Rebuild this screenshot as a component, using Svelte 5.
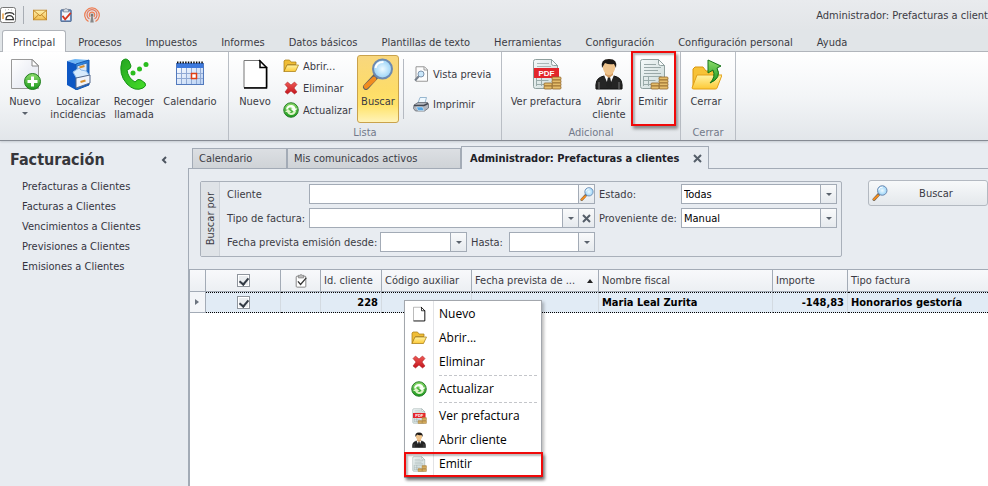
<script lang="ts">
  const quickIcons = [
    { icon: 'mail', label: 'Correo' },
    { icon: 'clipboard', label: 'Tareas' },
    { icon: 'antenna', label: 'Comunicados' }
  ];

  const ribbonTabs = [
    'Principal',
    'Procesos',
    'Impuestos',
    'Informes',
    'Datos básicos',
    'Plantillas de texto',
    'Herramientas',
    'Configuración',
    'Configuración personal',
    'Ayuda'
  ];

  const navLinks = [
    'Prefacturas a Clientes',
    'Facturas a Clientes',
    'Vencimientos a Clientes',
    'Previsiones a Clientes',
    'Emisiones a Clientes'
  ];

  const menuGroups = [
    [
      { icon: 'page', label: 'Nuevo' },
      { icon: 'folder', label: 'Abrir...' },
      { icon: 'delete', label: 'Eliminar' }
    ],
    [{ icon: 'refresh', label: 'Actualizar' }],
    [
      { icon: 'pdf', label: 'Ver prefactura' },
      { icon: 'client', label: 'Abrir cliente' },
      { icon: 'emit', label: 'Emitir' }
    ]
  ];

  let activeRibbonTab = $state('Principal');
  let cliente = $state('');
  let tipoFactura = $state('');
  let desde = $state('');
  let hasta = $state('');
  let estado = $state('Todas');
  let proveniente = $state('Manual');
  let allChecked = $state(true);
  let rowChecked = $state(true);
</script>

{#snippet sheet()}
  <path d="M5.500 1.500h16l6 6v21a2 2 0 0 1-2 2h-20a2 2 0 0 1-2-2v-25a2 2 0 0 1 2-2z" fill="url(#g-sheet)" stroke="#8fa09f" />
  <path d="M21.500 1.500v4a2 2 0 0 0 2 2h4z" fill="#f7fafa" stroke="#8fa09f" />
  <path d="M6.500 18.500h18M6.500 22.500h12M6.500 26.500h9M6.500 18v10M11.500 18v10" stroke="#9aabaa" fill="none" />
{/snippet}

{#snippet coins()}
  <g fill="#e5bd6b" stroke="#8f642a" stroke-width=".8">
    <rect x="22" y="19" width="9" height="3" rx="1" />
    <rect x="22" y="22" width="9" height="3" rx="1" />
    <rect x="22" y="25" width="9" height="3" rx="1" />
    <rect x="22" y="28" width="9" height="3" rx="1" />
    <rect x="14" y="25" width="8" height="3" rx="1" />
    <rect x="14" y="28" width="8" height="3" rx="1" />
  </g>
{/snippet}

{#snippet icon(name: string, size: number)}
  <svg class="icon" width={size} height={size} viewBox="0 0 32 32" aria-hidden="true">
    {#if name === 'app'}
      <rect x="1" y="1" width="30" height="30" rx="4" fill="#fff" stroke="#777" stroke-width="2" />
      <path d="M6 13v11" stroke="#e79b3c" stroke-width="3" />
      <path d="M10 6h2M16 5h2M22 6h2" stroke="#b9b9b9" stroke-width="2" />
      <path d="M10 15q1-4 9-4t9 5" fill="none" stroke="#333" stroke-width="2.500" />
      <path d="M12 25q0-8 7-8t8 8z" fill="#fff" stroke="#333" stroke-width="2.500" />
    {:else if name === 'mail'}
      <rect x="1" y="5" width="30" height="22" fill="url(#g-mail)" stroke="#c48a2a" stroke-width="2" />
      <path d="M2 6l14 12L30 6M2 26l10-10M30 26L20 16" fill="none" stroke="#b97c1d" stroke-width="2" />
    {:else if name === 'clipboard'}
      <rect x="4" y="4" width="24" height="27" rx="2" fill="#6d8fc0" stroke="#49658f" stroke-width="2" />
      <rect x="7" y="8" width="18" height="20" fill="#f5f7fb" />
      <path d="M10 3h3q3-4 6 0h3v6H10z" fill="#d7dde6" stroke="#6b7686" stroke-width="1.500" />
      <path d="M8 18l6 8L27 11" fill="none" stroke="#d6361f" stroke-width="4" />
    {:else if name === 'antenna'}
      <g fill="none" stroke="#ee7d52" stroke-width="2.500">
        <path d="M9 29A14.500 14.500 0 1 1 23 29" />
        <path d="M11 24A10 10 0 1 1 21 24" stroke="#e07a62" />
        <path d="M12.500 20A5.500 5.500 0 1 1 19.500 20" />
      </g>
      <circle cx="16" cy="16" r="3" fill="#777" />
      <path d="M14.500 18h3l2 13h-7z" fill="#888" />
    {:else if name === 'new'}
      <path d="M2.500 1.500h21l6 6v23h-27z" fill="url(#g-paper)" stroke="#999" />
      <path d="M23 1.500v6.500h6.500z" fill="#fff" stroke="#888" />
      <circle cx="23.500" cy="23.500" r="8" fill="url(#g-green)" stroke="#1e7d1c" />
      <path d="M23.500 18.500v10M18.500 23.500h10" stroke="#fff" stroke-width="3" />
    {:else if name === 'cabinet'}
      <path d="M5 3l8-2 14 1-13 4z" fill="#6db5f5" />
      <path d="M5 3l9 3v26l-9-5z" fill="#0d57c4" />
      <path d="M14 6l13-4v25l-13 5z" fill="url(#g-blue)" stroke="#1556ad" />
      <path d="M15 8l10-3v8l-10 3z" fill="#dbe7f7" stroke="#3370b8" />
      <path d="M11 14l6-4 2 2 5 1 4 5-13 3z" fill="#d7eafc" stroke="#8db9e8" />
      <path d="M14 20l14-3v8l-14 5z" fill="#f0f3fa" stroke="#54698c" />
      <path d="M17.500 9.500l5-1.500M18.500 24l5-1.500" stroke="#d9902d" stroke-width="2" />
    {:else if name === 'phone'}
      <path d="M4 3q4-4 7 0l2 5q0 3-4 4 1 8 8 12 3-4 6-2l4 3q2 3-2 5-8 4-16-4Q0 16 4 3z" fill="url(#g-phone)" stroke="#169316" />
      <circle cx="15" cy="15" r="2.500" fill="#2bbd1f" />
      <circle cx="21.500" cy="11" r="2.500" fill="#2bbd1f" />
      <circle cx="28" cy="6.500" r="2.500" fill="#2bbd1f" />
    {:else if name === 'calendar'}
      <rect x="2.500" y="5.500" width="27" height="21" fill="url(#g-cal)" stroke="#5279bd" />
      <path d="M3 5h26v5H3z" fill="#3d79dd" />
      <path d="M3 4.500h27" stroke="#111" stroke-width="2" stroke-dasharray="1.500 1.200" />
      <path d="M3 15.500h26M3 20.500h26M7.500 10v16M12.500 10v16M17.500 10v16M22.500 10v16M26.500 10v16" stroke="#90a9d4" />
      <rect x="17.500" y="15.500" width="5" height="5" fill="#fff" stroke="#e13d12" stroke-width="1.500" />
    {:else if name === 'page'}
      <path d="M5 2.500h16l7 7v20H5z" fill="#fff" stroke="#777" />
      <path d="M21 2.500v7h6.500V30H5" fill="none" stroke="#000" stroke-width="1.500" />
      <path d="M20 2l8 8" stroke="#000" stroke-width="1.500" />
    {:else if name === 'folder'}
      <path d="M2 27V6l2-2h9l3 4h10v5H9z" fill="#f0bd35" stroke="#a97e16" stroke-width="1.500" />
      <path d="M2 27L8 14h23l-6 13z" fill="url(#g-folder)" stroke="#a97e16" stroke-width="1.500" />
    {:else if name === 'delete'}
      <path d="M4 9l5-5 7 6 7-6 5 5-6 7 6 8-5 4-7-6-7 6-5-4 6-8z" fill="url(#g-red)" stroke="#a51519" />
    {:else if name === 'refresh'}
      <circle cx="16" cy="16" r="14.500" fill="url(#g-green)" stroke="#2a7e2b" stroke-width="2" />
      <path d="M6 15Q7 5 18 6q6 1 7 7h4l-7 7-7-7h4q-2-3-6-2-3 1-3 4z" fill="#fafff6" />
      <path d="M26 18q-2 9-11 8-5-1-7-6H4l6-6 7 6h-4q3 3 6 1 2-1 3-3z" fill="#dff5c8" />
    {:else if name === 'search'}
      <path d="M15 17L4 29" stroke="#60615f" stroke-width="6" stroke-linecap="round" />
      <path d="M12 21L4 28.500" stroke="#f28c1f" stroke-width="4.500" stroke-linecap="round" />
      <circle cx="20.500" cy="11" r="9.500" fill="url(#g-lens)" stroke="#6d89b0" stroke-width="2" />
      <path d="M13.500 10q1-6 8-6" fill="none" stroke="#fff" stroke-width="2" />
    {:else if name === 'preview'}
      <path d="M6 1.500h17l6 6v23H6z" fill="#fdfdfd" stroke="#999" stroke-width="2" />
      <path d="M22 2v6h7" fill="none" stroke="#999" stroke-width="2" />
      <path d="M12 20l-8 9" stroke="#77808c" stroke-width="4" />
      <circle cx="16" cy="16" r="6" fill="#cbe8fb" stroke="#7c93ac" stroke-width="2" />
    {:else if name === 'print'}
      <path d="M14 3h13l-4 14H9z" fill="#eff9ff" stroke="#79a1c2" stroke-width="1.500" />
      <path d="M2 18l8-5h19l2 3v8l-8 6H5l-4-5z" fill="#b2b6be" stroke="#5e646e" stroke-width="1.500" />
      <path d="M2 19h20l8-4" fill="none" stroke="#434852" stroke-width="3" />
      <path d="M7 22h12l3 7H10z" fill="#55a7e6" stroke="#e7f4ff" />
    {:else if name === 'pdf'}
      {@render sheet()}
      <path d="M7 5.500h12M7 8.500h14" stroke="#aab8b7" />
      <rect x="4" y="10" width="25" height="10" fill="#e3262b" />
      <text class="pdf-text" x="16.500" y="18" text-anchor="middle">PDF</text>
      {@render coins()}
    {:else if name === 'client'}
      <path d="M3 31q-1-10 5-12l6-2h4l6 2q6 2 5 12z" fill="#252525" stroke="#111" />
      <path d="M11 17l5 12 5-12-5-2z" fill="#fff" />
      <path d="M15 19h2l2 9-3 3-3-3z" fill="#222" />
      <path d="M12 12h8v5l-4 3-4-3z" fill="#d39c62" />
      <path d="M10 6q6-5 12 0v5q-2 6-6 6t-6-6z" fill="#efc48d" />
      <path d="M9 10Q7 1 16 1t7 9l-2-4q-5 1-9-1z" fill="#1d1916" />
      <path d="M6 24v7M26 24v7" stroke="#777" />
    {:else if name === 'emit'}
      {@render sheet()}
      <path d="M7 6.500h12M7 9.500h17M7 12.500h14M7 15.500h17" stroke="#99a8a8" />
      {@render coins()}
    {:else if name === 'close-folder'}
      <path d="M3 30V11l2-2h8l3 4h12v10H9z" fill="#f7c237" stroke="#d8960f" />
      <path d="M2 30l5-13h25l-5 13q0 1-2 1H4q-2 0-2-1z" fill="url(#g-folder)" stroke="#e3a019" />
      <path d="M20 25q6-6 3-13l-5 3V2l13 6-4 2q5 10-7 15z" fill="url(#g-green)" stroke="#167318" />
    {:else if name === 'clipboard-gray'}
      <rect x="5" y="5" width="22" height="25" rx="2" fill="#fff" stroke="#777" stroke-width="2" />
      <path d="M10 3h3q3-4 6 0h3v6H10z" fill="#bbb" stroke="#777" stroke-width="1.500" />
      <path d="M9 17l6 7L28 9" fill="none" stroke="#333" stroke-width="3" />
    {/if}
  </svg>
{/snippet}

{#snippet bigButton(name: string, label: string, kind = '')}
  <button type="button" class="big-button {kind}">
    {@render icon(name, 32)}
    <span>{label}</span>
    {#if name === 'new'}
      <i class="caret"></i>
    {/if}
  </button>
{/snippet}

{#snippet smallButton(name: string, label: string)}
  <button type="button" class="small-button">
    {@render icon(name, 16)}
    <span>{label}</span>
  </button>
{/snippet}

{#snippet cross()}
  <svg width="9" height="9" viewBox="0 0 9 9" aria-hidden="true">
    <path d="M1 1l7 7M8 1L1 8" stroke="#555e69" stroke-width="2" />
  </svg>
{/snippet}

<!-- Shared gradients -->
<svg class="defs" width="0" height="0" aria-hidden="true">
  <defs>
    <linearGradient id="g-sheet" x2="1" y2="1"><stop stop-color="#f4f9f9" /><stop offset="1" stop-color="#cbd9d8" /></linearGradient>
    <linearGradient id="g-paper" x2="1" y2="1"><stop stop-color="#fff" /><stop offset="1" stop-color="#dfe3ef" /></linearGradient>
    <linearGradient id="g-mail" x2="0" y2="1"><stop stop-color="#fff3b0" /><stop offset="1" stop-color="#f2bd4c" /></linearGradient>
    <linearGradient id="g-green" x2="0" y2="1"><stop stop-color="#8ddc6c" /><stop offset="1" stop-color="#1b991d" /></linearGradient>
    <linearGradient id="g-phone" x2="1" y2="1"><stop stop-color="#25a521" /><stop offset="1" stop-color="#45de28" /></linearGradient>
    <linearGradient id="g-blue" x2="1" y2="1"><stop stop-color="#3ba1f7" /><stop offset="1" stop-color="#0b4cb4" /></linearGradient>
    <linearGradient id="g-cal" x2="1" y2="1"><stop stop-color="#fff" /><stop offset="1" stop-color="#b7d0f4" /></linearGradient>
    <linearGradient id="g-folder" x2="0" y2="1"><stop stop-color="#fff3a5" /><stop offset="1" stop-color="#fdc935" /></linearGradient>
    <linearGradient id="g-red" x2="0" y2="1"><stop stop-color="#ef5a56" /><stop offset="1" stop-color="#c3141c" /></linearGradient>
    <radialGradient id="g-lens"><stop stop-color="#eefaff" /><stop offset="1" stop-color="#98d3f8" /></radialGradient>
  </defs>
</svg>

<div class="app">
  <header class="titlebar">
    <button type="button" class="quick app-icon" aria-label="Aplicación">{@render icon('app', 16)}</button>
    <span class="quick-divider"></span>
    {#each quickIcons as item (item.icon)}
      <button type="button" class="quick" aria-label={item.label}>{@render icon(item.icon, item.icon === 'antenna' ? 16 : 14)}</button>
    {/each}
    <span class="window-title">Administrador: Prefacturas a client</span>
  </header>

  <nav class="ribbon-tabs">
    {#each ribbonTabs as tab (tab)}
      <button type="button" class:active={tab === activeRibbonTab} onclick={() => (activeRibbonTab = tab)}>{tab}</button>
    {/each}
  </nav>

  <div class="ribbon">
    <section class="group main-group">
      <div class="group-body">
        {@render bigButton('new', 'Nuevo', 'narrow')}
        {@render bigButton('cabinet', 'Localizar incidencias', 'wide')}
        {@render bigButton('phone', 'Recoger llamada')}
        {@render bigButton('calendar', 'Calendario', 'wide')}
      </div>
    </section>
    <section class="group list-group">
      <div class="group-body">
        {@render bigButton('page', 'Nuevo', 'medium')}
        <div class="stack">
          {@render smallButton('folder', 'Abrir...')}
          {@render smallButton('delete', 'Eliminar')}
          {@render smallButton('refresh', 'Actualizar')}
        </div>
        {@render bigButton('search', 'Buscar', 'pressed')}
        <span class="divider"></span>
        <div class="stack loose">
          {@render smallButton('preview', 'Vista previa')}
          {@render smallButton('print', 'Imprimir')}
        </div>
      </div>
      <h2>Lista</h2>
    </section>
    <section class="group extra-group">
      <div class="group-body">
        {@render bigButton('pdf', 'Ver prefactura', 'widest')}
        {@render bigButton('client', 'Abrir cliente', 'narrow')}
        {@render bigButton('emit', 'Emitir', 'narrow marked')}
      </div>
      <h2>Adicional</h2>
    </section>
    <section class="group close-group">
      <div class="group-body">
        {@render bigButton('close-folder', 'Cerrar', 'narrow')}
      </div>
      <h2>Cerrar</h2>
    </section>
  </div>

  <div class="workspace">
    <aside>
      <div class="aside-header">
        <h1>Facturación</h1>
        <button type="button" aria-label="Contraer">
          <svg width="6" height="8" viewBox="0 0 6 8" aria-hidden="true">
            <path d="M5 1L2 4l3 3" fill="none" stroke="#4d5560" stroke-width="2" />
          </svg>
        </button>
      </div>
      <ul>
        {#each navLinks as link (link)}
          <li><a href="#top">{link}</a></li>
        {/each}
      </ul>
    </aside>

    <main>
      <div class="doc-tabs">
        <button type="button" class="doc-tab first">Calendario</button>
        <button type="button" class="doc-tab second">Mis comunicados activos</button>
        <div class="doc-tab active">
          <span>Administrador: Prefacturas a clientes</span>
          <button type="button" aria-label="Cerrar pestaña">{@render cross()}</button>
        </div>
      </div>

      <div class="document">
        <div class="filters">
          <form class="search-panel" onsubmit={(e) => e.preventDefault()}>
            <div class="side-caption"><span>Buscar por</span></div>
            <div class="fields">
              <label for="cliente">Cliente</label>
              <div class="control">
                <input id="cliente" bind:value={cliente} />
                <button type="button" aria-label="Buscar cliente">{@render icon('search', 14)}</button>
              </div>
              <label for="estado">Estado:</label>
              <div class="control">
                <select id="estado" bind:value={estado}>
                  <option>Todas</option>
                </select>
                <i class="arrow"></i>
              </div>

              <label for="tipo">Tipo de factura:</label>
              <div class="control">
                <select id="tipo" bind:value={tipoFactura}>
                  <option value=""></option>
                  <option>Honorarios gestoría</option>
                </select>
                <i class="arrow"></i>
                <button type="button" aria-label="Borrar" onclick={() => (tipoFactura = '')}>{@render cross()}</button>
              </div>
              <label for="proveniente">Proveniente de:</label>
              <div class="control">
                <select id="proveniente" bind:value={proveniente}>
                  <option>Manual</option>
                </select>
                <i class="arrow"></i>
              </div>

              <div class="dates">
                <label for="desde">Fecha prevista emisión desde:</label>
                <div class="control">
                  <input id="desde" bind:value={desde} />
                  <button type="button" aria-label="Elegir fecha desde"><i class="caret"></i></button>
                </div>
                <label for="hasta">Hasta:</label>
                <div class="control">
                  <input id="hasta" bind:value={hasta} />
                  <button type="button" aria-label="Elegir fecha hasta"><i class="caret"></i></button>
                </div>
              </div>
            </div>
          </form>
          <button type="button" class="search-button">
            {@render icon('search', 16)}
            <span>Buscar</span>
          </button>
        </div>

        <div class="grid">
          <table>
            <colgroup>
              <col class="c-mark" />
              <col class="c-check" />
              <col class="c-task" />
              <col class="c-id" />
              <col class="c-code" />
              <col class="c-date" />
              <col class="c-name" />
              <col class="c-check" />
              <col />
            </colgroup>
            <thead>
              <tr>
                <th></th>
                <th class="center"><input type="checkbox" aria-label="Seleccionar todo" bind:checked={allChecked} /></th>
                <th class="center">{@render icon('clipboard-gray', 14)}</th>
                <th>Id. cliente</th>
                <th>Código auxiliar</th>
                <th><span class="sorted">Fecha prevista de ... <i></i></span></th>
                <th>Nombre fiscal</th>
                <th>Importe</th>
                <th>Tipo factura</th>
              </tr>
            </thead>
            <tbody>
              <tr>
                <td class="mark"><i></i></td>
                <td class="center"><input type="checkbox" aria-label="Seleccionar fila" bind:checked={rowChecked} /></td>
                <td></td>
                <td class="number">228</td>
                <td></td>
                <td></td>
                <td>Maria Leal Zurita</td>
                <td class="number">-148,83</td>
                <td>Honorarios gestoría</td>
              </tr>
            </tbody>
          </table>

          <div class="menu" role="menu">
            {#each menuGroups as items, i}
              {#if i > 0}
                <hr />
              {/if}
              {#each items as item (item.label)}
                <button type="button" role="menuitem" class:marked={item.icon === 'emit'}>
                  {@render icon(item.icon, 16)}
                  <span>{item.label}</span>
                </button>
              {/each}
            {/each}
          </div>
        </div>
      </div>
    </main>
  </div>
</div>

<style>
  :global(body) {
    margin: 0;
    background: #e8ecf1;
    overflow: hidden;
  }

  .defs {
    position: absolute;
  }

  .app {
    display: flex;
    flex-direction: column;
    height: 100vh;
    overflow: hidden;
    font-family: Tahoma, 'DejaVu Sans Condensed', 'DejaVu Sans', sans-serif;
    font-size: 11px;
    line-height: 13px;
    color: #3b3b44;
  }

  .app * {
    box-sizing: border-box;
  }

  button,
  input,
  select {
    margin: 0;
    padding: 0;
    border: 0;
    background: none;
    font: inherit;
    color: inherit;
  }

  .icon {
    display: block;
    flex: none;
  }

  .caret {
    display: block;
    border: 3px solid transparent;
    border-top-color: #5a626c;
    border-bottom: 0;
  }

  /* Title bar */
  .titlebar {
    display: flex;
    align-items: center;
    flex: none;
    height: 30px;
    background: linear-gradient(#e9ebee, #e2e5e8);
    white-space: nowrap;
  }

  .quick {
    display: flex;
    justify-content: center;
    width: 26px;
  }

  .app-icon {
    width: 16px;
  }

  .quick-divider {
    width: 1px;
    height: 18px;
    margin: 0 3px 0 7px;
    background: #a8adb4;
  }

  .window-title {
    margin-left: auto;
  }

  /* Ribbon */
  .ribbon-tabs {
    display: flex;
    flex: none;
    height: 22px;
    padding-left: 2px;
    background: #e1e5e8;
    border-bottom: 1px solid #b0b4ba;
    white-space: nowrap;
  }

  .ribbon-tabs button {
    height: 22px;
    padding: 2px 11px 0;
    border: 1px solid transparent;
    border-bottom: 0;
  }

  .ribbon-tabs button.active {
    background: #fff;
    border-color: #b0b4ba;
    border-radius: 3px 3px 0 0;
    padding: 2px 10px 0;
  }

  .ribbon {
    display: flex;
    flex: none;
    height: 89px;
    background: linear-gradient(#fff, #f3f5f7 50%, #e2e6ea);
    border-bottom: 1px solid #868b94;
    box-shadow: 0 1px 2px #c5cad1;
  }

  .group {
    display: flex;
    flex-direction: column;
    flex: none;
    padding: 3px 3px 0;
    border-right: 1px solid #b9bec5;
  }

  .main-group {
    width: 229px;
  }

  .list-group {
    width: 273px;
  }

  .extra-group {
    width: 179px;
  }

  .close-group {
    width: 55px;
  }

  .group-body {
    display: flex;
    height: 68px;
  }

  .group h2 {
    margin: 3px 0 0;
    font-size: 11px;
    font-weight: normal;
    text-align: center;
    color: #72798a;
  }

  .big-button {
    display: flex;
    flex-direction: column;
    align-items: center;
    flex: none;
    width: 50px;
    height: 68px;
    padding-top: 2px;
    border: 1px solid transparent;
    border-radius: 3px;
  }

  .big-button > span {
    margin-top: 5px;
  }

  .big-button > .caret {
    margin-top: 4px;
  }

  .narrow {
    width: 44px;
  }

  .medium {
    width: 46px;
  }

  .wide {
    width: 62px;
  }

  .widest {
    width: 82px;
  }

  .pressed {
    width: 42px;
    background: linear-gradient(#f8d77e, #fddc69 50%, #ffe36a 75%, #fff3b9);
    border-color: #c9a24c;
  }

  .marked {
    position: relative;
  }

  .marked::after {
    content: '';
    position: absolute;
    inset: -5px -2px -4px -1px;
    border: 2px solid #f00a0a;
    box-shadow: 2px 3px 3px #00000066, inset 2px 2px 2px #00000044;
    pointer-events: none;
  }

  .stack {
    display: flex;
    flex-direction: column;
    flex: none;
    width: 79px;
    padding-left: 5px;
  }

  .loose {
    width: 86px;
    padding-top: 8px;
    gap: 8px;
  }

  .small-button {
    display: flex;
    align-items: center;
    gap: 4px;
    height: 22px;
    white-space: nowrap;
  }

  .divider {
    width: 1px;
    margin: 4px;
    background: #b5bac2;
  }

  /* Navigation */
  .workspace {
    display: flex;
    flex: 1;
    min-height: 0;
  }

  aside {
    flex: none;
    width: 188px;
    padding: 9px 21px 0 10px;
  }

  .aside-header {
    display: flex;
    justify-content: space-between;
    align-items: center;
  }

  h1 {
    margin: 0;
    font-size: 16px;
    line-height: 20px;
    color: #36363b;
  }

  ul {
    margin: 7px 0 0;
    padding: 0 0 0 12px;
    list-style: none;
  }

  li {
    line-height: 20px;
    white-space: nowrap;
  }

  a {
    color: #34343f;
    text-decoration: none;
  }

  /* Document tabs */
  main {
    display: flex;
    flex-direction: column;
    flex: 1;
    min-width: 0;
    padding-top: 5px;
  }

  .doc-tabs {
    display: flex;
    align-items: flex-end;
    flex: none;
    height: 23px;
    padding-left: 4px;
    border-bottom: 1px solid #a3abb6;
    white-space: nowrap;
  }

  .doc-tab {
    display: flex;
    align-items: center;
    height: 20px;
    padding-left: 6px;
    background: linear-gradient(#dcdfe3, #cfd3d7);
    border: 1px solid #a3abb6;
    border-bottom: 0;
  }

  .first {
    width: 95px;
  }

  .second {
    width: 174px;
  }

  .doc-tab.active {
    justify-content: space-between;
    width: 248px;
    height: 23px;
    margin-bottom: -1px;
    padding: 0 6px 0 8px;
    background: #e8ecf1;
    font-weight: bold;
    color: #202027;
  }

  .doc-tab.active button {
    display: flex;
  }

  .document {
    display: flex;
    flex-direction: column;
    flex: 1;
    min-height: 0;
    border-left: 1px solid #a3abb6;
  }

  /* Search filters */
  .filters {
    display: flex;
    align-items: flex-start;
    gap: 26px;
    padding: 11px 0 12px 11px;
  }

  .search-panel {
    display: flex;
    flex: none;
    width: 642px;
    margin-top: 1px;
    border: 1px solid #a9b0ba;
    border-radius: 2px;
  }

  .side-caption {
    display: flex;
    align-items: center;
    justify-content: center;
    width: 19px;
    background: #dfe3e7;
    border-right: 1px solid #cdd2d8;
  }

  .side-caption span {
    writing-mode: vertical-rl;
    transform: rotate(180deg);
  }

  .fields {
    display: grid;
    grid-template-columns: 78px 286px 78px 1fr;
    grid-auto-rows: 20px;
    gap: 4px;
    flex: 1;
    align-items: center;
    padding: 2px 4px 4px 7px;
    white-space: nowrap;
  }

  .dates {
    grid-column: 1 / 3;
    display: grid;
    grid-template-columns: 149px 87px 34px minmax(0, 1fr);
    gap: 4px;
    align-items: center;
  }

  .control {
    display: flex;
    height: 20px;
    background: #fff;
    border: 1px solid #a3abb6;
  }

  .control input,
  .control select {
    flex: 1;
    min-width: 0;
    padding: 0 2px;
    color: #000;
    outline: 0;
    appearance: none;
  }

  .control button,
  .arrow {
    display: flex;
    align-items: center;
    justify-content: center;
    flex: none;
    width: 16px;
    background: linear-gradient(#f9fafb, #e6eaee);
    border-left: 1px solid #a3abb6;
  }

  .arrow {
    pointer-events: none;
  }

  .arrow::before {
    content: '';
    border: 3px solid transparent;
    border-top-color: #5a626c;
    border-bottom: 0;
  }

  .search-button {
    display: flex;
    align-items: center;
    flex: 1;
    min-width: 0;
    height: 26px;
    padding: 0 3px;
    background: linear-gradient(#f7f9fa, #e4e8ec);
    border: 1px solid #b3b9c1;
    border-radius: 3px;
  }

  .search-button span {
    flex: 1;
    text-align: center;
  }

  /* Data grid */
  .grid {
    position: relative;
    flex: 1;
    background: #fff;
    border-top: 1px solid #a3abb6;
    border-left: 1px solid #a3abb6;
  }

  table {
    width: 100%;
    table-layout: fixed;
    border-collapse: separate;
    border-spacing: 0;
  }

  .c-mark {
    width: 16px;
  }

  .c-check {
    width: 75px;
  }

  .c-task {
    width: 40px;
  }

  .c-id {
    width: 61px;
  }

  .c-code {
    width: 90px;
  }

  .c-date {
    width: 127px;
  }

  .c-name {
    width: 174px;
  }

  th,
  td {
    padding: 0 3px;
    text-align: left;
    white-space: nowrap;
    overflow: hidden;
  }

  th {
    height: 22px;
    background: linear-gradient(#f8f9fb, #eceff3);
    border-right: 1px solid #a3abb6;
    border-bottom: 1px solid #a3abb6;
    font-weight: normal;
  }

  th:last-child,
  td:last-child {
    border-right: 0;
  }

  td {
    height: 21px;
    background: #e1ebf5;
    border-top: 1px dotted #000;
    border-right: 1px solid #d3dae1;
    border-bottom: 1px dotted #000;
    font-weight: bold;
    color: #000;
  }

  td.mark {
    padding: 0 5px;
    background: #f3f5f8;
    border-top: 0;
    border-right: 1px solid #a3abb6;
    border-bottom: 1px solid #a3abb6;
  }

  .mark i {
    display: block;
    border: 3px solid transparent;
    border-left: 4px solid #6c747f;
    border-right: 0;
    width: 0;
  }

  .center {
    text-align: center;
  }

  .center .icon,
  .center input {
    display: block;
    margin: 0 auto;
  }

  .number {
    text-align: right;
  }

  input[type='checkbox'] {
    appearance: none;
    width: 13px;
    height: 13px;
    background: #e9ecef;
    border: 1px solid #8f959d;
    box-shadow: inset 0 0 0 1px #fff;
  }

  input[type='checkbox']:checked::after {
    content: '';
    display: block;
    width: 4px;
    height: 7px;
    margin: 1px 0 0 3px;
    border: solid #333b45;
    border-width: 0 2px 2px 0;
    transform: rotate(40deg);
  }

  .sorted {
    display: flex;
    justify-content: space-between;
    align-items: center;
    padding-right: 2px;
  }

  .sorted i {
    border: 3px solid transparent;
    border-top: 0;
    border-bottom: 4px solid #222;
  }

  /* Context menu */
  .menu {
    position: absolute;
    top: 30px;
    left: 214px;
    width: 138px;
    padding: 1px;
    background: linear-gradient(90deg, #fff 28px, #e2e3e6 28px, #e2e3e6 29px, #fff 29px);
    border: 1px solid #a3a7ad;
    box-shadow: 2px 2px 3px #00000044;
    font-family: 'Open Sans', 'Noto Sans', sans-serif;
    font-size: 12px;
    line-height: 16px;
    color: #000;
  }

  .menu button {
    display: flex;
    align-items: center;
    gap: 12px;
    width: 100%;
    height: 24px;
    padding-left: 5px;
  }

  .menu hr {
    margin: 1px 3px 1px 33px;
    border: 0;
    border-top: 1px dashed #c4c6ca;
  }

  .menu .marked::after {
    inset: 0 -3px -1px -2px;
  }

  .pdf-text {
    font: bold 8px 'Liberation Sans', sans-serif;
    fill: #fff;
  }
</style>
